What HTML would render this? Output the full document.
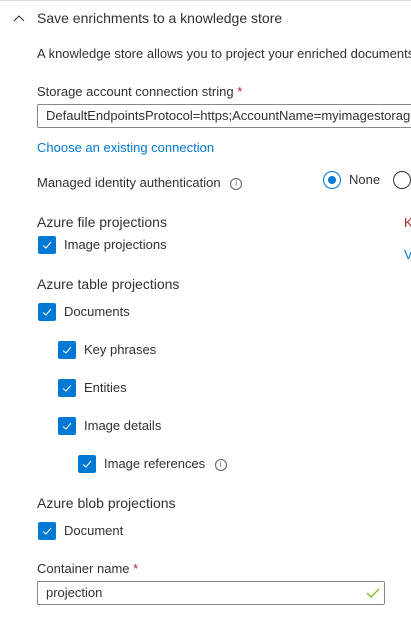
<!DOCTYPE html>
<html><head><meta charset="utf-8"><style>
body{margin:0;width:411px;height:624px;overflow:hidden;background:#fff;font-family:"Liberation Sans",sans-serif;font-size:13px;color:#323130;position:relative}
.a{position:absolute;white-space:nowrap;line-height:16px}
.cb{position:absolute;width:18px;height:18px;background:#0078d4;border-radius:2px}
.cb svg{position:absolute;left:3px;top:3px}
.inp{position:absolute;border:1px solid #8a8886;border-radius:2px;box-sizing:border-box;height:24px;line-height:22px;padding-left:8px;overflow:hidden;white-space:nowrap}
.req{color:#a4262c}
.info{display:inline-block;width:10px;height:10px;border:1px solid #605e5c;border-radius:50%;font-size:8px;line-height:10px;text-align:center;color:#605e5c;vertical-align:middle;margin-left:6px}
</style></head><body>
<div style="position:absolute;left:0;top:0;width:411px;height:1px;background:#e1dfdd"></div>
<svg class="a" style="left:13px;top:14px" width="12" height="8"><path d="M1 7 L6 2 L11 7" fill="none" stroke="#323130" stroke-width="1"/></svg>
<div class="a" style="left:37px;top:10px;font-size:14px">Save enrichments to a knowledge store</div>
<div class="a" style="left:37px;top:46px">A knowledge store allows you to project your enriched documents</div>
<div class="a" style="left:37px;top:84px">Storage account connection string <span class="req">*</span></div>
<div class="inp" style="left:37px;top:104px;width:390px">DefaultEndpointsProtocol=https;AccountName=myimagestorage</div>
<div class="a" style="left:37px;top:140px;color:#0078d4">Choose an existing connection</div>
<div class="a" style="left:37px;top:175px">Managed identity authentication <span class="info">i</span></div>
<div style="position:absolute;left:323px;top:171px;width:18px;height:18px;border:1px solid #0078d4;border-radius:50%;box-sizing:border-box"><div style="position:absolute;left:4px;top:4px;width:8px;height:8px;border-radius:50%;background:#0078d4"></div></div>
<div class="a" style="left:349px;top:172px">None</div>
<div style="position:absolute;left:393px;top:171px;width:18px;height:18px;border:1px solid #323130;border-radius:50%;box-sizing:border-box"></div>
<div class="a" style="left:404px;top:215px;color:#a4262c">K</div>
<div class="a" style="left:404px;top:247px;color:#0078d4">V</div>
<div class="a" style="left:37px;top:214px;font-size:14px">Azure file projections</div>
<div class="cb" style="left:38px;top:236px"><svg width="12" height="12"><path d="M2 6.5 L5 9 L10 3" fill="none" stroke="#fff" stroke-width="1"/></svg></div>
<div class="a" style="left:64px;top:237px">Image projections</div>
<div class="a" style="left:37px;top:276px;font-size:14px">Azure table projections</div>
<div class="cb" style="left:38px;top:303px"><svg width="12" height="12"><path d="M2 6.5 L5 9 L10 3" fill="none" stroke="#fff" stroke-width="1"/></svg></div>
<div class="a" style="left:64px;top:304px">Documents</div>
<div class="cb" style="left:58px;top:341px"><svg width="12" height="12"><path d="M2 6.5 L5 9 L10 3" fill="none" stroke="#fff" stroke-width="1"/></svg></div>
<div class="a" style="left:84px;top:342px">Key phrases</div>
<div class="cb" style="left:58px;top:379px"><svg width="12" height="12"><path d="M2 6.5 L5 9 L10 3" fill="none" stroke="#fff" stroke-width="1"/></svg></div>
<div class="a" style="left:84px;top:380px">Entities</div>
<div class="cb" style="left:58px;top:417px"><svg width="12" height="12"><path d="M2 6.5 L5 9 L10 3" fill="none" stroke="#fff" stroke-width="1"/></svg></div>
<div class="a" style="left:84px;top:418px">Image details</div>
<div class="cb" style="left:78px;top:455px"><svg width="12" height="12"><path d="M2 6.5 L5 9 L10 3" fill="none" stroke="#fff" stroke-width="1"/></svg></div>
<div class="a" style="left:104px;top:456px">Image references <span class="info">i</span></div>
<div class="a" style="left:37px;top:495px;font-size:14px">Azure blob projections</div>
<div class="cb" style="left:38px;top:522px"><svg width="12" height="12"><path d="M2 6.5 L5 9 L10 3" fill="none" stroke="#fff" stroke-width="1"/></svg></div>
<div class="a" style="left:64px;top:523px">Document</div>
<div class="a" style="left:37px;top:561px">Container name <span class="req">*</span></div>
<div class="inp" style="left:37px;top:581px;width:348px">projection</div>
<svg class="a" style="left:366px;top:587px" width="14" height="12"><path d="M1 6 L5 10 L13 2" fill="none" stroke="#6bb700" stroke-width="1.2"/></svg>
</body></html>
